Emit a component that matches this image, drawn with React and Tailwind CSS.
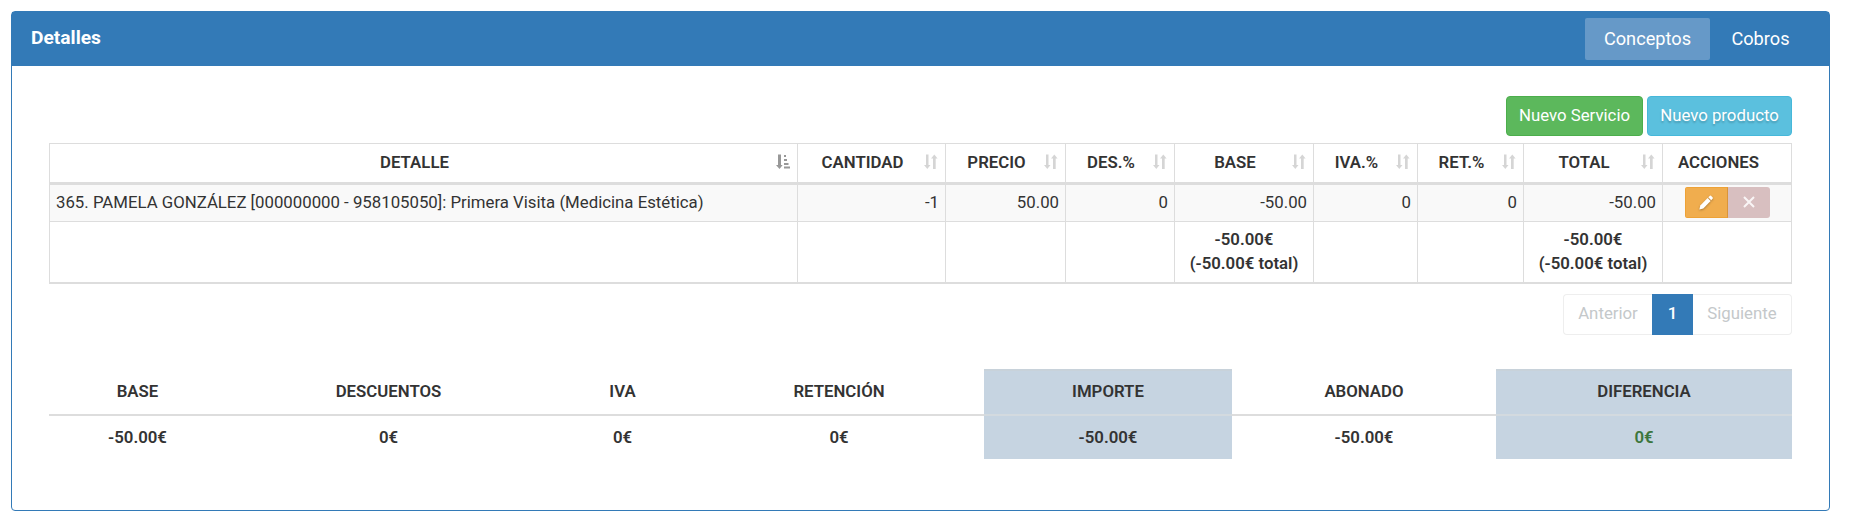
import React from 'react';

const columns = [
    { label: 'DETALLE', sort: 'active', value: '365. PAMELA GONZÁLEZ [000000000 - 958105050]: Primera Visita (Medicina Estética)' },
    { label: 'CANTIDAD', sort: 'both', value: '-1' },
    { label: 'PRECIO', sort: 'both', value: '50.00' },
    { label: 'DES.%', sort: 'both', value: '0' },
    { label: 'BASE', sort: 'both', value: '-50.00', total: '-50.00€' },
    { label: 'IVA.%', sort: 'both', value: '0' },
    { label: 'RET.%', sort: 'both', value: '0' },
    { label: 'TOTAL', sort: 'both', value: '-50.00', total: '-50.00€' },
    { label: 'ACCIONES' },
];

const summary = [
    { label: 'BASE', value: '-50.00€' },
    { label: 'DESCUENTOS', value: '0€' },
    { label: 'IVA', value: '0€' },
    { label: 'RETENCIÓN', value: '0€' },
    { label: 'IMPORTE', value: '-50.00€', highlight: true },
    { label: 'ABONADO', value: '-50.00€' },
    { label: 'DIFERENCIA', value: '0€', highlight: true, green: true },
];

const SortIcon = () => (
    <svg width="14" height="16" viewBox="0 0 14 16" fill="#333" className="opacity-20 shrink-0">
        <path d="M2 0.5h2.5v10.5h2L3.3 15 0 11H2z" />
        <path d="M9 15V4.5H7L10.3 0.5l3.3 4H11.7V15z" />
    </svg>
);

const SortActiveIcon = () => (
    <svg width="14" height="16" viewBox="0 0 14 16" fill="#333" className="opacity-50 shrink-0">
        <path d="M2 0.5h3v10.5h1.7L3.5 15 0 11H2z" />
        <path d="M8 1h2v2H8zM8 5h3v2H8zM8 9h4.5v2H8zM8 12.5h6v2H8z" />
    </svg>
);

const PencilIcon = () => (
    <svg width="14" height="15" viewBox="0 0 14 15" fill="#fff" className="drop-shadow-[0_1px_1px_rgba(0,0,0,0.3)]">
        <path d="M0.3 14.4l1-4L8.6 3l3 3-7.3 7.4z" />
        <path d="M9.3 2.3L11 0.7q.5-.4 1 0l1.7 1.7q.4.5 0 1L12.2 5.2z" />
    </svg>
);

const Actions = () => (
    <div className="flex h-[31px] w-[85px] rounded-[3px] overflow-hidden">
        <button className="flex w-[43px] items-center justify-center bg-[#f0ad4e] border border-[#eea236] border-r-[#d9953a]">
            <PencilIcon />
        </button>
        <button className="flex w-[42px] items-center justify-center bg-[#d8bfc0] pb-px">
            <svg width="12" height="12" viewBox="0 0 12 12" stroke="#fff" strokeWidth="2" opacity="0.85">
                <path d="M1 1l10 10M11 1L1 11" />
            </svg>
        </button>
    </div>
);

const DetailTable = () => (
    <div className="grid grid-cols-[748px_148px_120px_109px_139px_104px_106px_139px_129px] w-[1743px] border-t border-r border-[#ddd]">
        {columns.map((col) => (
            <div key={col.label} className="flex h-[41px] items-center border-l border-b-3 border-[#ddd] pb-[2px] pl-[6px] pr-[7px] font-semibold">
                <span className={`flex-1 text-center ${col.sort ? 'pr-[3px]' : 'pr-[16px]'}`}>{col.label}</span>
                {col.sort === 'active' && <SortActiveIcon />}
                {col.sort === 'both' && <SortIcon />}
            </div>
        ))}
        {columns.map((col, i) => (
            <div
                key={col.label}
                className={`flex h-[37px] items-center border-l border-b border-[#ddd] bg-[#f9f9f9] px-[6px] pb-[2px] ${i === 0 ? '' : i === 8 ? 'justify-center' : 'justify-end'}`}
            >
                {i === 8 ? <Actions /> : col.value}
            </div>
        ))}
        {columns.map((col) => (
            <div key={col.label} className="h-[62px] border-l border-b-2 border-[#ddd] pt-[5px] text-center font-semibold">
                {col.total && (
                    <>
                        <div>{col.total}</div>
                        <div>({col.total} total)</div>
                    </>
                )}
            </div>
        ))}
    </div>
);

const Pagination = () => (
    <div className="flex h-[41px] leading-[37px]">
        <span className="w-[89px] rounded-l border border-r-0 border-[#eee] text-center text-[#c4c8ca]">Anterior</span>
        <span className="w-[41px] bg-[#337ab7] pt-px text-center font-medium text-white">1</span>
        <span className="w-[99px] rounded-r border border-l-0 border-[#eee] text-center text-[#c4c8ca]">Siguiente</span>
    </div>
);

const Summary = () => (
    <div className="grid grid-cols-[177px_325px_143px_290px_248px_264px_296px] w-[1743px] text-center font-semibold">
        {summary.map((item) => (
            <div key={item.label} className={item.highlight ? 'bg-[#c6d4e1]' : ''}>
                <div className={`h-[47px] border-y-2 pt-[8px] ${item.highlight ? 'border-[#d3dadf] border-t-[#c8d2da]' : 'border-[#ddd] border-t-transparent'}`}>
                    {item.label}
                </div>
                <div className={`h-[43px] pt-[9px] ${item.green ? 'text-[#3c763d]' : ''}`}>{item.value}</div>
            </div>
        ))}
    </div>
);

const App = () => {
    return (
        <div className="h-[517px] bg-white pl-[11px] pt-[11px] font-['Roboto',sans-serif] text-[16.8px] leading-[24px] text-[#333]">
            <div className="h-[500px] w-[1819px] rounded-[4px] border border-[#337ab7]">
                <div className="flex h-[54px] justify-between bg-[#337ab7] pl-[19px] pr-[18px] text-[18.2px] text-white">
                    <h3 className="pt-[14px] text-[19.2px] font-bold">Detalles</h3>
                    <div className="flex pt-[6px]">
                        <span className="h-[42px] w-[125px] rounded-[2px] bg-[#6699c8] pt-[9px] text-center">Conceptos</span>
                        <span className="h-[42px] w-[101px] pt-[9px] text-center">Cobros</span>
                    </div>
                </div>
                <div className="flex flex-col pl-[37px] pr-[37px] pt-[30px]">
                    <div className="mb-[7px] flex justify-end gap-1 text-white">
                        <button className="h-10 w-[137px] rounded-[4px] border border-[#4cae4c] bg-[#5cb85c] pb-[2px]">Nuevo Servicio</button>
                        <button className="h-10 w-[145px] rounded-[4px] border border-[#46b8da] bg-[#5bc0de] pb-[2px] [text-shadow:0_2px_2px_rgba(0,0,0,0.2)]">Nuevo producto</button>
                    </div>
                    <DetailTable />
                    <div className="mt-[10px] mb-[34px] flex justify-end">
                        <Pagination />
                    </div>
                    <Summary />
                </div>
            </div>
        </div>
    );
};

export default App;
